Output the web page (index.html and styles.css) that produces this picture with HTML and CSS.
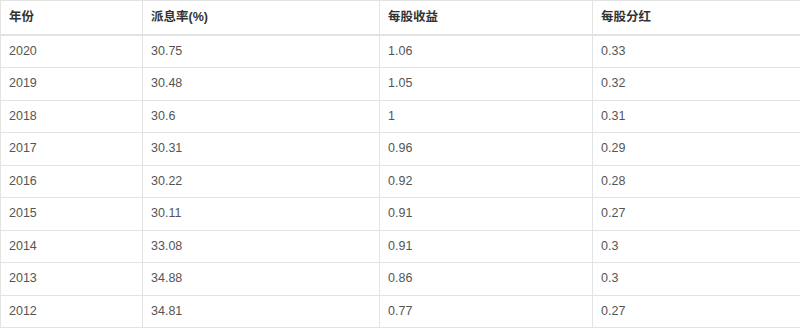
FILE: index.html
```html
<!DOCTYPE html>
<html lang="zh-CN">
<head>
    <meta charset="UTF-8">
    <meta name="viewport" content="width=device-width, initial-scale=1.0">
    <title>分红数据</title>
    <link rel="stylesheet" href="styles.css">
</head>
<body>

    <table class="dividend-table">
        <colgroup>
            <col class="col-year">
            <col class="col-rate">
            <col class="col-eps">
            <col class="col-dps">
        </colgroup>
        <thead>
            <tr>
                <th>年份</th>
                <th>派息率(%)</th>
                <th>每股收益</th>
                <th>每股分红</th>
            </tr>
        </thead>
        <tbody>
            <tr><td>2020</td><td>30.75</td><td>1.06</td><td>0.33</td></tr>
            <tr><td>2019</td><td>30.48</td><td>1.05</td><td>0.32</td></tr>
            <tr><td>2018</td><td>30.6</td><td>1</td><td>0.31</td></tr>
            <tr><td>2017</td><td>30.31</td><td>0.96</td><td>0.29</td></tr>
            <tr><td>2016</td><td>30.22</td><td>0.92</td><td>0.28</td></tr>
            <tr><td>2015</td><td>30.11</td><td>0.91</td><td>0.27</td></tr>
            <tr><td>2014</td><td>33.08</td><td>0.91</td><td>0.3</td></tr>
            <tr><td>2013</td><td>34.88</td><td>0.86</td><td>0.3</td></tr>
            <tr><td>2012</td><td>34.81</td><td>0.77</td><td>0.27</td></tr>
        </tbody>
    </table>

</body>
</html>
```

FILE: styles.css
```css
body {
    margin: 0;
    padding: 0;
    background: #fff;
    font-family: "Liberation Sans", Arial, "Noto Sans CJK SC", sans-serif;
    font-size: 12.5px;
    color: #555;
    overflow: hidden;
}

.dividend-table {
    width: 830px;
    table-layout: fixed;
    border-collapse: collapse;
    border: 1px solid #e3e3e3;
}

.col-year { width: 142px; }
.col-rate { width: 237px; }
.col-eps  { width: 213px; }

.dividend-table th,
.dividend-table td {
    border: 1px solid #e3e3e3;
    padding: 7px 8px;
    line-height: 17.5px;
    text-align: left;
    vertical-align: middle;
}

.dividend-table th {
    padding-top: 8px;
    color: #333;
    font-weight: bold;
    border-bottom: 2px solid #e3e3e3;
}
```
